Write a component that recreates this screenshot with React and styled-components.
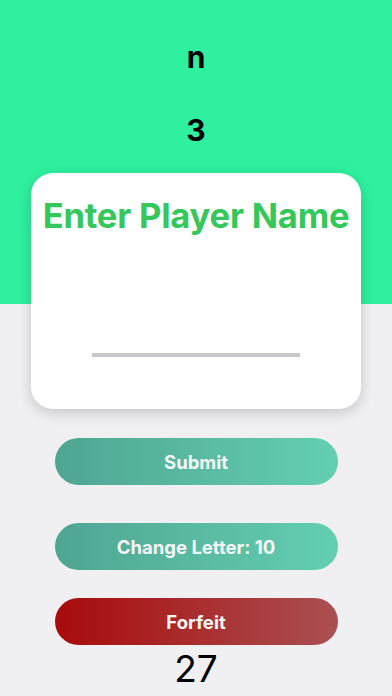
import styled, { createGlobalStyle } from 'styled-components';

const GlobalStyle = createGlobalStyle`
  html, body {
    margin: 0;
    padding: 0;
  }
  body {
    font-family: Inter, "Noto Sans", sans-serif;
    background: linear-gradient(to bottom, #2ef09f 0, #2ef09f 304px, #f0f0f2 304px);
    min-height: 696px;
  }
`;

const Screen = styled.div`
  display: flex;
  flex-direction: column;
  align-items: center;
  padding-top: 39px;
  height: 696px;
  box-sizing: border-box;
`;

const Stat = styled.div`
  font-size: 30px;
  font-weight: 700;
  line-height: 36px;
  color: #000;
  margin-bottom: ${(p) => p.$gap}px;
`;

const Card = styled.div`
  width: 330px;
  height: 236px;
  box-sizing: border-box;
  background: #fff;
  border-radius: 22px;
  box-shadow: 0 4px 14px rgba(0, 0, 0, 0.18);
  display: flex;
  flex-direction: column;
  align-items: center;
  padding-top: 23px;
`;

const Title = styled.h1`
  margin: 0;
  font-size: 34.5px;
  font-weight: 700;
  line-height: 40px;
  color: #34c759;
  letter-spacing: -0.2px;
  white-space: nowrap;
`;

const NameInput = styled.input`
  margin-top: 117px;
  width: 208px;
  height: 0;
  padding: 0;
  border: none;
  border-bottom: 4px solid #c9c7cc;
  outline: none;
  background: transparent;
`;

const Actions = styled.div`
  display: flex;
  flex-direction: column;
  align-items: center;
  margin-top: 29px;
`;

const PillButton = styled.button`
  width: 283px;
  height: 47px;
  border: none;
  border-radius: 24px;
  font-family: inherit;
  font-size: 18.5px;
  font-weight: 700;
  color: #f6f6f6;
  margin-bottom: ${(p) => p.$gap}px;
  background: ${(p) =>
    p.$danger
      ? 'linear-gradient(to right, #a80b0b, #aa5052)'
      : 'linear-gradient(to right, #4fa592, #63cfb1)'};
`;

const Score = styled.div`
  font-size: 37px;
  line-height: 42px;
  font-weight: 400;
  color: #000;
  margin-top: 3px;
`;

export default function App() {
  return (
    <>
      <GlobalStyle />
      <Screen>
        <Stat $gap={37}>n</Stat>
        <Stat $gap={25}>3</Stat>
        <Card>
          <Title>Enter Player Name</Title>
          <NameInput type="text" />
        </Card>
        <Actions>
          <PillButton $gap={38}>Submit</PillButton>
          <PillButton $gap={28}>Change Letter: 10</PillButton>
          <PillButton $danger $gap={0}>Forfeit</PillButton>
          <Score>27</Score>
        </Actions>
      </Screen>
    </>
  );
}
